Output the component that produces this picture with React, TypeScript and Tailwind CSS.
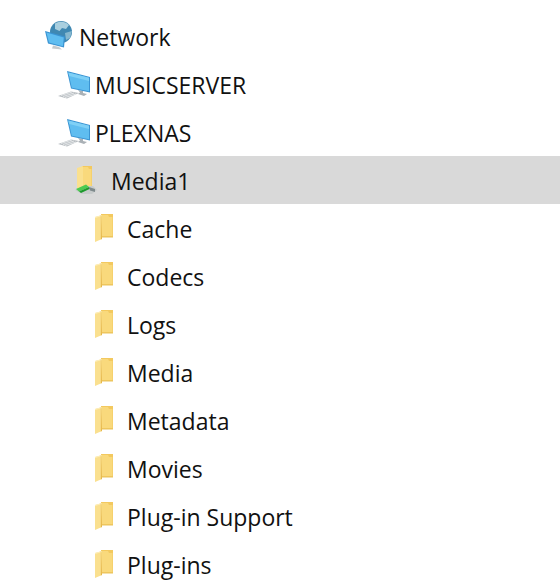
const Folder = () => (
  <svg width="22" height="32" viewBox="0 0 22 32" className="shrink-0">
    <path d="M8 2 H20 V25 H8 Z" fill="#f3c95f" />
    <path d="M9 3 H15 L16 5 H19.5 V24 H9 Z" fill="#f9d97c" />
    <path d="M2 5 L9 3 V27 L2 30 Z" fill="#fae08f" />
    <path d="M2 5 L9 3 V4 L2 6 Z" fill="#fdeebb" />
    <path d="M8.2 3 L9 27 L7.8 27.5 L7.8 3.2 Z" fill="#e6b64a" />
    <path d="M9 24.5 H20 V25.5 H9 Z" fill="#e9c25c" />
  </svg>
);

const Computer = () => (
  <svg width="34" height="30" viewBox="0 0 34 30" className="shrink-0">
    <path d="M0 27 L13 22.5 L21 24 L9 29.5 Z" fill="#b9bec2" />
    <path d="M3 26.5 L14 23 M5 27.5 L16 24 M7 28.5 L18 25" stroke="#eef0f1" strokeWidth="0.8" />
    <path d="M20 21 L25 22 L25 24 L29 25 L26 27 L20 25 L22 23.5 Z" fill="#aab1b6" />
    <path d="M9 2 L32 8 V23.5 L13 19.5 Z" fill="#3a93d2" />
    <path d="M10.3 3.4 L31 8.8 V22.3 L13.8 18.7 Z" fill="#5fbdf0" />
    <path d="M10.3 3.4 L31 8.8 V12 L11.3 7 Z" fill="#7fd0f6" />
  </svg>
);

const NetworkIcon = () => (
  <svg width="32" height="32" viewBox="0 0 32 32" className="shrink-0">
    <circle cx="17" cy="12" r="11" fill="#3f88b2" />
    <path d="M11 3.5 C15 1 21 1 25 5 L22 9 L18 8 L15.5 11 L11 9 Z" fill="#a9cfdf" />
    <path d="M21 13 L28 11 L26 18 L22 20 Z" fill="#86b8cf" />
    <path d="M1 11 L21 16.5 L20 27.5 L4 23.5 Z" fill="#3a93d2" />
    <path d="M2.4 12.4 L19.8 17.4 L18.9 26.2 L5 22.6 Z" fill="#5fbdf0" />
    <path d="M9 25.5 L15 27 L18 29.5 L8 28.5 Z" fill="#c5cacd" />
  </svg>
);

const MappedDrive = () => (
  <svg width="36" height="34" viewBox="0 0 36 34" className="shrink-0">
    <path d="M7 3 H17 V24 H7 Z" fill="#f3c95f" />
    <path d="M8 4 H13 L14 6 H16.5 V23 H8 Z" fill="#f9d97c" />
    <path d="M2 5 L8 3 V24 L2 26 Z" fill="#fae08f" />
    <path d="M0 27 L8 23 L18 23 L22 27 L17 31 L7 31 Z" fill="#c8cccc" />
    <path d="M1 26 L11 21.5 L14 24 L4 28.5 Z" fill="#4ccb50" />
    <path d="M4 28.5 L14 24 L15 25.8 L6 30 Z" fill="#1d9a2c" />
    <path d="M14 24 L20 26 L20 29 L15 27.5 Z" fill="#7f8a8c" />
  </svg>
);

type Row = { label: string; indent: string; icon: React.ReactNode; selected?: boolean; gap: string };

const rows: Row[] = [
  { label: "Network", indent: "pl-[44px]", icon: <NetworkIcon />, gap: "gap-[3px]" },
  { label: "MUSICSERVER", indent: "pl-[58px]", icon: <Computer />, gap: "gap-[3px]" },
  { label: "PLEXNAS", indent: "pl-[58px]", icon: <Computer />, gap: "gap-[3px]" },
  { label: "Media1", indent: "pl-[75px]", icon: <MappedDrive />, selected: true, gap: "gap-0" },
  ...["Cache", "Codecs", "Logs", "Media", "Metadata", "Movies", "Plug-in Support", "Plug-ins"].map((label) => ({
    label,
    indent: "pl-[93px]",
    icon: <Folder />,
    gap: "gap-3",
  })),
];

export default function App() {
  return (
    <div className="w-[560px] h-[588px] overflow-hidden bg-white pt-3 font-['Open_Sans','Noto_Sans',sans-serif] text-[23px] text-[#111]">
      {rows.map((r) => (
        <div
          key={r.label}
          className={`h-12 flex items-center ${r.indent} ${r.gap} ${r.selected ? "bg-[#d9d9d9]" : ""}`}
        >
          {r.icon}
          <span className="relative top-[1px] leading-none whitespace-nowrap">{r.label}</span>
        </div>
      ))}
    </div>
  );
}
